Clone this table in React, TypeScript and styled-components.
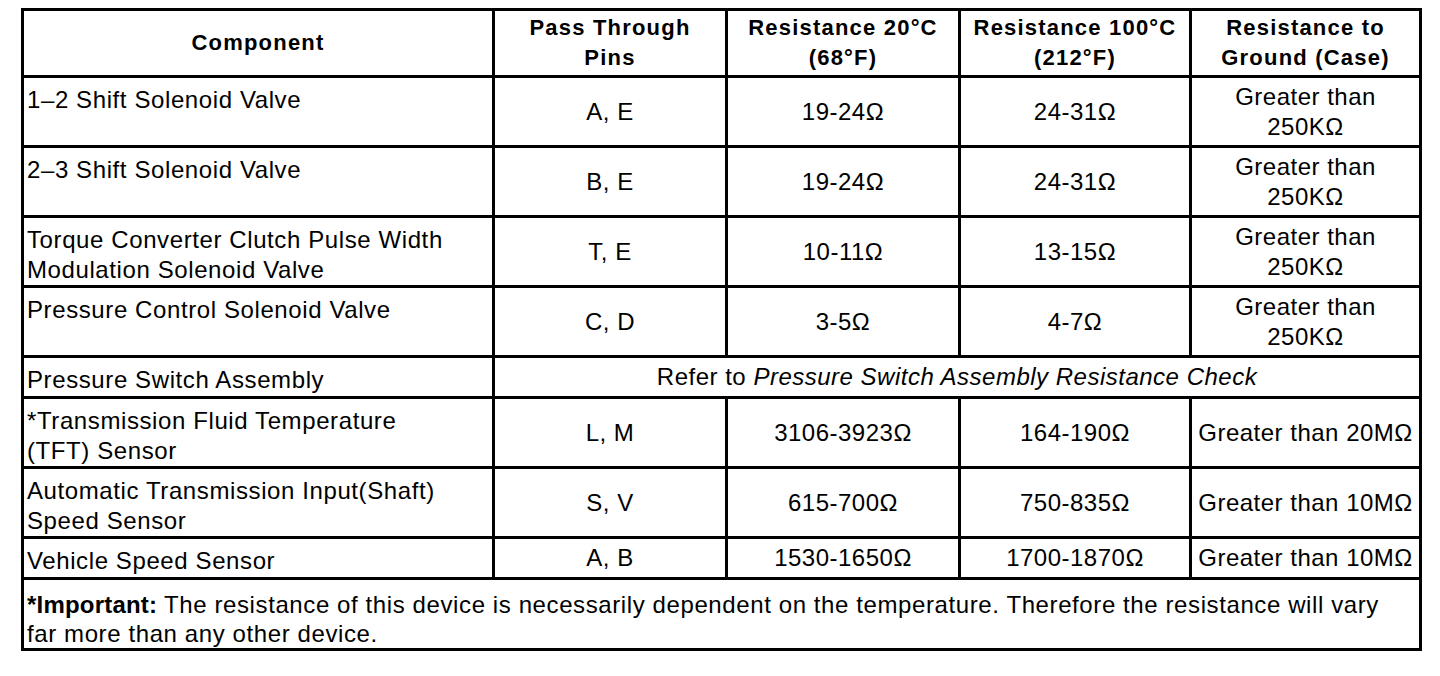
import React from 'react';
import styled, { createGlobalStyle } from 'styled-components';

const GlobalStyle = createGlobalStyle`
  html, body {
    margin: 0;
    padding: 0;
    background: #fff;
  }
  body {
    font-family: "Liberation Sans", Arial, sans-serif;
    color: #000;
  }
`;

const Page = styled.div`
  padding: 8px 0 0 21px;
`;

const Table = styled.table`
  width: 1398px;
  table-layout: fixed;
  border-collapse: collapse;
  border: 3px solid #000;
`;

const Row = styled.tr<{ $h: number }>`
  height: ${(p) => p.$h}px;
`;

const HeadCell = styled.th`
  border: 3px solid #000;
  padding: 0 4px;
  font-size: 22px;
  font-weight: 700;
  letter-spacing: 1.2px;
  line-height: 30px;
  text-align: center;
  vertical-align: middle;
`;

const NameCell = styled.td`
  border: 3px solid #000;
  padding: 7px 4px 0 3px;
  font-size: 24px;
  letter-spacing: 0.6px;
  line-height: 30px;
  text-align: left;
  vertical-align: top;
`;

const ValueCell = styled.td`
  border: 3px solid #000;
  padding: 0 3px;
  font-size: 24px;
  letter-spacing: 0.5px;
  line-height: 30px;
  text-align: center;
  vertical-align: middle;
  white-space: nowrap;
`;

const NoteCell = styled.td`
  border: 3px solid #000;
  padding: 10px 4px 0 3px;
  font-size: 24px;
  letter-spacing: 0.6px;
  line-height: 29px;
  text-align: left;
  vertical-align: top;
`;

const Strong = styled.b`
  font-weight: 700;
  letter-spacing: 0.2px;
`;

const Ref = styled.em`
  font-style: italic;
`;

type Item = {
  name: React.ReactNode;
  pins: string;
  r20: string;
  r100: string;
  ground: React.ReactNode;
  h: number;
};

const twoLine = (
  <>
    Greater than
    <br />
    250KΩ
  </>
);

const upper: Item[] = [
  { name: '1–2 Shift Solenoid Valve', pins: 'A, E', r20: '19-24Ω', r100: '24-31Ω', ground: twoLine, h: 70 },
  { name: '2–3 Shift Solenoid Valve', pins: 'B, E', r20: '19-24Ω', r100: '24-31Ω', ground: twoLine, h: 70 },
  {
    name: (
      <>
        Torque Converter Clutch Pulse Width
        <br />
        Modulation Solenoid Valve
      </>
    ),
    pins: 'T, E',
    r20: '10-11Ω',
    r100: '13-15Ω',
    ground: twoLine,
    h: 70,
  },
  { name: 'Pressure Control Solenoid Valve', pins: 'C, D', r20: '3-5Ω', r100: '4-7Ω', ground: twoLine, h: 70 },
];

const lower: Item[] = [
  {
    name: (
      <>
        *Transmission Fluid Temperature
        <br />
        (TFT) Sensor
      </>
    ),
    pins: 'L, M',
    r20: '3106-3923Ω',
    r100: '164-190Ω',
    ground: 'Greater than 20MΩ',
    h: 70,
  },
  {
    name: (
      <>
        Automatic Transmission Input(Shaft)
        <br />
        Speed Sensor
      </>
    ),
    pins: 'S, V',
    r20: '615-700Ω',
    r100: '750-835Ω',
    ground: 'Greater than 10MΩ',
    h: 70,
  },
  {
    name: 'Vehicle Speed Sensor',
    pins: 'A, B',
    r20: '1530-1650Ω',
    r100: '1700-1870Ω',
    ground: 'Greater than 10MΩ',
    h: 41,
  },
];

const ItemRow = ({ item }: { item: Item }) => (
  <Row $h={item.h}>
    <NameCell>{item.name}</NameCell>
    <ValueCell>{item.pins}</ValueCell>
    <ValueCell>{item.r20}</ValueCell>
    <ValueCell>{item.r100}</ValueCell>
    <ValueCell>{item.ground}</ValueCell>
  </Row>
);

const App = () => (
  <>
    <GlobalStyle />
    <Page>
      <Table>
        <colgroup>
          <col style={{ width: 471 }} />
          <col style={{ width: 233 }} />
          <col style={{ width: 233 }} />
          <col style={{ width: 231 }} />
          <col style={{ width: 230 }} />
        </colgroup>
        <thead>
          <Row $h={67}>
            <HeadCell>Component</HeadCell>
            <HeadCell>
              Pass Through
              <br />
              Pins
            </HeadCell>
            <HeadCell>
              Resistance 20°C
              <br />
              (68°F)
            </HeadCell>
            <HeadCell>
              Resistance 100°C
              <br />
              (212°F)
            </HeadCell>
            <HeadCell>
              Resistance to
              <br />
              Ground (Case)
            </HeadCell>
          </Row>
        </thead>
        <tbody>
          {upper.map((item, i) => (
            <ItemRow key={i} item={item} />
          ))}
          <Row $h={41}>
            <NameCell>Pressure Switch Assembly</NameCell>
            <ValueCell colSpan={4}>
              Refer to <Ref>Pressure Switch Assembly Resistance Check</Ref>
            </ValueCell>
          </Row>
          {lower.map((item, i) => (
            <ItemRow key={i} item={item} />
          ))}
          <Row $h={70}>
            <NoteCell colSpan={5}>
              <Strong>*Important:</Strong> The resistance of this device is necessarily dependent on the temperature.
              Therefore the resistance will vary
              <br />
              far more than any other device.
            </NoteCell>
          </Row>
        </tbody>
      </Table>
    </Page>
  </>
);

export default App;
